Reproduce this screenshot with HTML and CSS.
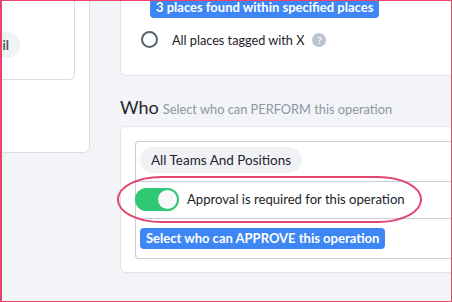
FILE: index.html
```html
<!doctype html>
<html lang="en">

<head>
    <meta charset="UTF-8" />
    <meta name="viewport" content="width=device-width, initial-scale=1.0" />
    <title>Operation - Permissions</title>
    <link rel="stylesheet" href="styles.css">
</head>

<body>
    <div class="frame">
        <!-- Left side panel (cut off) -->
        <div class="side-panel">
            <div class="side-card">
                <span class="chip chip-bold">Email</span>
            </div>
        </div>

        <div class="main-column">
            <!-- Where -->
            <div class="card places-card">
                <div class="blue-label places-label">3 places found within specified places</div>
                <label class="radio-row">
                    <span class="radio"></span>
                    <span class="radio-text">All places tagged with X</span>
                    <span class="help-icon">?</span>
                </label>
            </div>

            <!-- Who -->
            <div class="section-title">
                <span class="section-name">Who</span>
                <span class="section-hint">Select who can PERFORM this operation</span>
            </div>

            <div class="card who-card">
                <div class="who-box">
                    <div class="who-row who-row-chips">
                        <span class="chip">All Teams And Positions</span>
                    </div>
                    <div class="who-row who-row-toggle">
                        <span class="toggle"><span class="toggle-knob"></span></span>
                        <span class="toggle-text">Approval is required for this operation</span>
                        <span class="highlight-ring"></span>
                    </div>
                    <div class="who-row who-row-approve">
                        <span class="blue-label">Select who can APPROVE this operation</span>
                    </div>
                </div>
            </div>
        </div>
    </div>
</body>

</html>
```

FILE: styles.css
```css
body {
    margin: 0;
    font-family: Lato, 'Liberation Sans', sans-serif;
    background: #f3f4f8;
}

.frame {
    width: 452px;
    height: 302px;
    box-sizing: border-box;
    border: 1px solid #e8446c;
    border-left-width: 2px;
    background: #f3f4f8;
    overflow: hidden;
    display: flex;
    align-items: flex-start;
}

/* Left panel */
.side-panel {
    flex: none;
    width: 150px;
    height: 192px;
    margin-left: -62px;
    margin-top: -40px;
    box-sizing: border-box;
    padding: 0 14px;
    background: white;
    border: 1px solid #dadee6;
    border-radius: 6px;
}

.side-card {
    height: 118px;
    box-sizing: border-box;
    padding: 70px 54px 0 0;
    display: flex;
    align-items: flex-start;
    background: white;
    border: 1px solid #d8dce6;
    border-top: none;
    border-radius: 0 0 6px 6px;
}

.side-card .chip {
    margin-left: auto;
}

.chip {
    display: inline-flex;
    align-items: center;
    height: 26px;
    padding: 0 11px;
    border-radius: 13px;
    background: #f1f2f6;
    color: #23232f;
    font-size: 13.5px;
}

.chip-bold {
    font-weight: 700;
    color: #55565e;
    font-size: 13px;
}

/* Main column */
.main-column {
    flex: none;
    width: 380px;
    margin-left: 30px;
    display: flex;
    flex-direction: column;
}

.card {
    background: white;
    border: 1px solid #dfe2e8;
    border-radius: 6px;
}

.places-card {
    margin-top: -30px;
    padding: 24px 0 23px 20px;
}

.blue-label {
    display: inline-flex;
    align-items: center;
    height: 21px;
    padding: 0 6px;
    border-radius: 4px;
    background: #3d86f4;
    color: white;
    font-weight: 700;
    font-size: 13px;
}

.places-label {
    align-self: flex-start;
    margin-left: 9px;
    height: 21px;
}

.radio-row {
    display: flex;
    align-items: center;
    height: 24px;
    margin-top: 10px;
}

.radio {
    width: 17px;
    height: 17px;
    box-sizing: border-box;
    border: 2px solid #58626e;
    border-radius: 50%;
}

.radio-text {
    margin-left: 14px;
    font-size: 12.7px;
    color: #1c1c2a;
}

.help-icon {
    margin-left: 8px;
    width: 14px;
    height: 14px;
    border-radius: 50%;
    background: #b9c3d1;
    color: white;
    font-size: 10px;
    font-weight: 700;
    display: flex;
    align-items: center;
    justify-content: center;
}

.section-title {
    margin-top: 20px;
    height: 22px;
    display: flex;
    align-items: baseline;
}

.section-name {
    font-size: 18px;
    color: #1f1f29;
}

.section-hint {
    margin-left: 4px;
    font-size: 12.8px;
    color: #8d96a2;
}

.who-card {
    margin-top: 8px;
    padding: 14px 0 13px 14px;
}

.who-box {
    border: 1px solid #c8cdd4;
    border-right: none;
    border-radius: 4px 0 0 4px;
}

.who-row {
    display: flex;
    align-items: center;
}

.who-row + .who-row {
    border-top: 1px solid #c8cdd4;
}

.who-row-chips {
    padding: 5px 0 8px 4px;
}

.who-row-toggle {
    position: relative;
    padding: 6px 0 7px 0;
}

.toggle {
    margin-left: -1px;
    width: 44px;
    height: 23px;
    box-sizing: border-box;
    border-radius: 12px;
    background: #30c875;
    padding: 2px;
    display: flex;
    justify-content: flex-end;
}

.toggle-knob {
    width: 19px;
    height: 19px;
    border-radius: 50%;
    background: #f8f9fb;
}

.toggle-text {
    margin-left: 8px;
    font-size: 13.1px;
    color: #1c1c2a;
}

/* annotation ring drawn over the toggle row */
.highlight-ring {
    position: absolute;
    left: -19px;
    top: -6px;
    width: 305px;
    height: 47px;
    box-sizing: border-box;
    border: 2px solid #e1466d;
    border-radius: 44px / 23px;
}

.who-row-approve {
    padding: 9px 0 9px 4px;
}
```
